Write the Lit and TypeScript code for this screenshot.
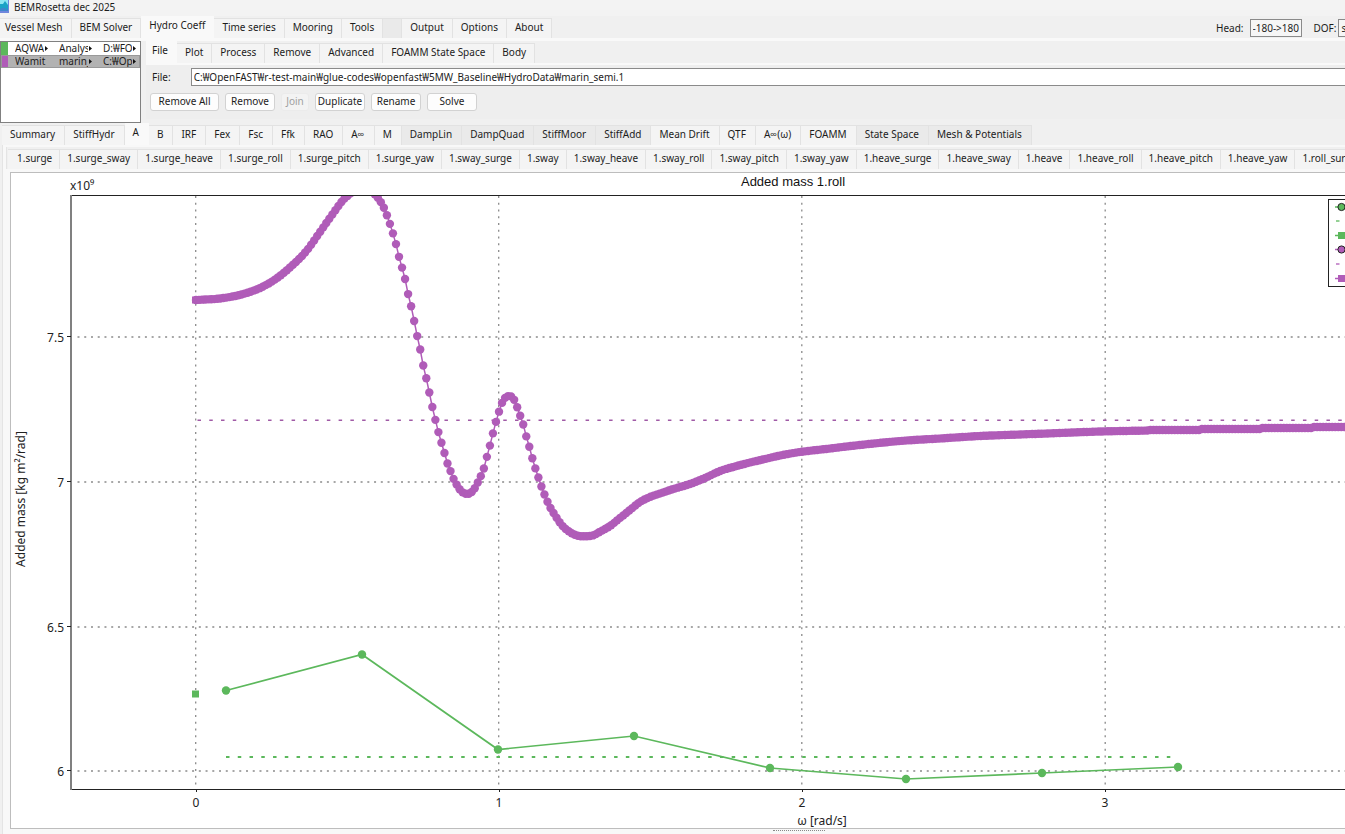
import { LitElement, html, css, svg, nothing } from "lit";
import { customElement, property } from "lit/decorators.js";
import { classMap } from "lit/directives/class-map.js";

interface Tab {
  label: string;
  active?: boolean;
  muted?: boolean;
}

const tabs = (names: string, active = "", muted: string[] = []): Tab[] =>
  names.split("|").map((label) => ({ label, active: label === active, muted: muted.includes(label) }));

const MENU = tabs(
  "Vessel Mesh|BEM Solver|Hydro Coeff|Time series|Mooring|Tools||Output|Options|About",
  "Hydro Coeff",
  [""],
);
const ACTIONS = tabs("File|Plot|Process|Remove|Advanced|FOAMM State Space|Body", "File");
const RESULTS = tabs(
  "Summary|StiffHydr|A|B|IRF|Fex|Fsc|Ffk|RAO|A∞|M|DampLin|DampQuad|StiffMoor|StiffAdd|Mean Drift|QTF|A∞(ω)|FOAMM|State Space|Mesh & Potentials",
  "A",
  ["DampLin", "DampQuad", "StiffMoor", "StiffAdd", "State Space", "Mesh & Potentials"],
);
const DOFS = tabs(
  "1.surge|1.surge_sway|1.surge_heave|1.surge_roll|1.surge_pitch|1.surge_yaw|1.sway_surge|1.sway|1.sway_heave|1.sway_roll|1.sway_pitch|1.sway_yaw|1.heave_surge|1.heave_sway|1.heave|1.heave_roll|1.heave_pitch|1.heave_yaw|1.roll_surge",
);

const GREEN = "#5cb85c";
const PURPLE = "#b05cb8";

/* Control points of the Wamit added mass curve, in plot units. */
const WAMIT: [number, number][] = [
  [196, 300], [205, 299.5], [215, 299], [230, 297], [245, 293.5], [260, 288], [275, 279.5], [290, 267.5],
  [306, 251.5], [320, 232], [333, 213.5], [343, 200], [348, 195.5], [355, 190], [362, 188],
  [370, 190], [378, 198], [383, 206], [386.3, 213.7], [389.3, 222], [392.3, 231.3], [395.3, 241.3],
  [398, 253], [401.3, 265], [404.7, 277.3], [407.3, 290.7], [410.7, 304.3], [413.7, 318.7], [416.5, 333],
  [419.8, 347.3], [422.3, 361.3], [425.7, 375.7], [428.8, 390], [431.5, 403.3], [434.7, 417],
  [437.5, 428.7], [440.7, 440.3], [444, 451.3], [446.7, 461.3], [450, 469.7], [452.7, 477], [455.7, 483],
  [458.7, 488], [461.7, 491.7], [466.7, 494], [470.7, 492.7], [473.7, 490], [477, 484], [480.3, 477.3],
  [483.7, 469], [486.3, 459], [489.3, 448], [492.2, 436.3], [495.3, 424.3], [498.5, 413.3], [501.2, 405],
  [504, 399], [508.3, 396], [511, 396.3], [513.7, 399], [516.7, 406], [519.7, 414.3], [523, 423.7],
  [525.8, 434.7], [529, 445.7], [531.8, 456.3], [534.7, 466.3], [538, 476.3], [540.8, 484.7], [544, 493.3],
  [546.8, 500.3], [550, 507], [553.3, 512.7], [561.7, 525], [568.3, 531], [576.7, 535.5], [585, 536.3],
  [593.3, 535.3], [600, 531.7], [610, 526], [620, 518], [630, 510], [640, 502], [650, 497], [660, 493.5],
  [675, 488.5], [690, 484], [705, 478], [720, 471], [735, 466.5], [750, 462.5], [765, 459], [780, 455.5],
  [800, 452], [830, 448.5], [860, 445], [900, 441], [940, 438.5], [980, 436], [1020, 434.5], [1060, 433],
  [1100, 431.5], [1150, 430.5], [1200, 429.5], [1260, 428.5], [1345, 427], [1520, 426],
];

const AQWA: [number, number][] = [
  [226, 690.5], [362, 654.5], [498, 749.5], [634, 736], [770, 768], [906, 779], [1042, 773], [1178, 767],
];

const STEP = 3.03;

function sample(points: [number, number][]): [number, number][] {
  const slope = (i: number) => {
    const a = points[Math.max(0, i - 1)];
    const b = points[Math.min(points.length - 1, i + 1)];
    return (b[1] - a[1]) / (b[0] - a[0]);
  };
  const out: [number, number][] = [];
  let i = 0;
  for (let x = points[0][0]; x < points[points.length - 1][0]; x += STEP) {
    while (x > points[i + 1][0]) i++;
    const [x0, y0] = points[i];
    const [x1, y1] = points[i + 1];
    const h = x1 - x0;
    const t = (x - x0) / h;
    const y =
      (2 * t ** 3 - 3 * t ** 2 + 1) * y0 +
      (t ** 3 - 2 * t ** 2 + t) * h * slope(i) +
      (3 * t ** 2 - 2 * t ** 3) * y1 +
      (t ** 3 - t ** 2) * h * slope(i + 1);
    out.push([x, x > 1150 ? Math.round(y) : y]);
  }
  return out;
}

const toPath = (pts: [number, number][]) => "M" + pts.map((p) => `${p[0].toFixed(1)} ${p[1].toFixed(1)}`).join("L");

@customElement("tab-strip")
export class TabStrip extends LitElement {
  @property({ attribute: false }) items: Tab[] = [];
  @property() label = "";

  static styles = css`
    :host {
      display: block;
      min-width: 0;
    }
    .strip {
      display: flex;
      align-items: flex-end;
      height: 22px;
      overflow: hidden;
    }
    .tab {
      flex: none;
      height: 20px;
      margin: 0;
      padding: 0 var(--tab-end, 8px) 2px var(--tab-start, 8px);
      border: 0 solid #e2e2e2;
      border-width: 1px 1px 0 0;
      background: #f4f4f4;
      color: #1c1c1c;
      font: 10px/17px "Noto Sans", "Open Sans", "Noto Sans CJK KR", sans-serif;
      white-space: pre;
    }
    .tab:first-child {
      padding-left: var(--first-start, 8px);
    }
    .tab.active {
      height: 22px;
      padding-bottom: 4px;
      border-color: #f9f9f9;
      background: #f9f9f9;
    }
    .tab.muted {
      background: #eaeaea;
    }
    .tab.blank {
      width: 19px;
    }
  `;

  render() {
    return html`<div class="strip" role="tablist" aria-label=${this.label}>
      ${this.items.map(
        (t) => html`<button
          class=${classMap({ tab: true, active: !!t.active, muted: !!t.muted, blank: !t.label })}
          role="tab"
          aria-selected=${t.active ? "true" : "false"}
        >${t.label}</button>`,
      )}
    </div>`;
  }
}

@customElement("mass-chart")
export class MassChart extends LitElement {
  static styles = css`
    :host {
      display: block;
      overflow: hidden;
    }
    .chart {
      display: block;
      width: 100%;
      height: 655px;
    }
    .text {
      font: 12px "Noto Sans", sans-serif;
      fill: #222;
    }
    .title {
      font: 13px "Liberation Sans", Arial, sans-serif;
      fill: #111;
    }
    .grid {
      stroke: #8a8a8a;
      stroke-width: 1.3;
      stroke-dasharray: 2 4.74;
    }
    .axis {
      stroke: #222;
      stroke-width: 1;
      fill: none;
    }
  `;

  private legendItem(y: number, color: string, kind: string) {
    if (kind === "dash") return svg`<path d="M1336 ${y}h3.5" stroke=${color} stroke-width="1.3" />`;
    return svg`<path d="M1335 ${y}h12" stroke=${color} stroke-width="1.5" />
      ${kind === "dot"
        ? svg`<circle cx="1341.500" cy=${y} r="3.600" fill=${color} stroke="#222" stroke-width="1" />`
        : svg`<rect x="1338" y=${y - 3.5} width="7" height="7" fill=${color} />`}`;
  }

  render() {
    const wamit = sample(WAMIT);
    return html`<svg class="chart" role="img" aria-label="Added mass 1.roll">
      <defs>
        <clipPath id="plot"><rect x="71" y="196" width="1445" height="593" /></clipPath>
      </defs>
      <g transform="translate(-11 -173)">
        ${[337, 482, 627, 771].map((y) => svg`<path class="grid" d="M77.500 ${y}H1516" />`)}
        ${[195.7, 498.7, 801.8, 1105.2].map((x) => svg`<path class="grid" d="M${x} 196V789" />`)}
        <path class="axis" d="M71 195.500H1516M71 789.500H1516" />
        <path d="M71 195V790" stroke="#808080" stroke-width="2" />
        ${[337, 482, 627, 771].map((y) => svg`<path class="axis" d="M67 ${y - 0.5}h4" />`)}
        ${[196, 499, 802, 1105].map((x) => svg`<path class="axis" d="M${x + 0.5} 789v3" />`)}

        <path d="M226 757H1172" stroke=${GREEN} stroke-width="1.800" stroke-dasharray="3.500 8.260" />
        <path d=${toPath(AQWA)} stroke=${GREEN} stroke-width="1.700" fill="none" />
        ${AQWA.map(([x, y]) => svg`<circle cx=${x} cy=${y} r="4.200" fill=${GREEN} />`)}
        <rect x="192" y="690.500" width="7" height="7" fill=${GREEN} />

        <path d="M197 420.300H1516" stroke="#a05aa6" stroke-width="1.500" stroke-dasharray="3.500 8.260" stroke-dashoffset="-0.500" />
        <g clip-path="url(#plot)">
          <path d=${toPath(wamit)} stroke=${PURPLE} stroke-width="1.500" fill="none" />
          ${wamit.map(([x, y]) => svg`<circle cx=${x} cy=${y} r="4.200" fill=${PURPLE} />`)}
          <rect x="192" y="296.500" width="7" height="7" fill=${PURPLE} />
        </g>

        <rect x="1328.500" y="199.500" width="180" height="87" fill="#fff" stroke="#222" />
        ${this.legendItem(207, GREEN, "dot")} ${this.legendItem(221, GREEN, "dash")}
        ${this.legendItem(235.5, GREEN, "box")} ${this.legendItem(249.5, PURPLE, "dot")}
        ${this.legendItem(264, PURPLE, "dash")} ${this.legendItem(278.5, PURPLE, "box")}

        <text class="title" x="793" y="186" text-anchor="middle">Added mass 1.roll</text>
        <text class="text" x="70" y="190">x10⁹</text>
        ${[["7.5", 337], ["7", 482], ["6.5", 627], ["6", 771]].map(
          ([t, y]) => svg`<text class="text" x="64" y=${Number(y) + 5} text-anchor="end">${t}</text>`,
        )}
        ${[["0", 196], ["1", 499], ["2", 802], ["3", 1105]].map(
          ([t, x]) => svg`<text class="text" x=${x} y="807" text-anchor="middle">${t}</text>`,
        )}
        <text class="text" x="822" y="825" text-anchor="middle">ω [rad/s]</text>
        <text class="text" transform="translate(25 499) rotate(-90)" text-anchor="middle">Added mass [kg m²/rad]</text>
      </g>
    </svg>`;
  }
}

@customElement("app-root")
export class AppRoot extends LitElement {
  static styles = css`
    :host {
      display: flex;
      flex-direction: column;
      min-height: 100vh;
      overflow: hidden;
      background: #f0f0f0;
      color: #1c1c1c;
      font: 10px/14px "Noto Sans", "Open Sans", "Noto Sans CJK KR", sans-serif;
    }
    .titlebar {
      display: flex;
      align-items: center;
      gap: 5px;
      height: 16px;
      background: #f3f3f3;
    }
    .logo {
      display: block;
      width: 9px;
      height: 13px;
      margin-bottom: 3px;
    }
    .name {
      padding-bottom: 2px;
    }
    .menubar {
      display: flex;
      justify-content: space-between;
      border-bottom: 3px solid #f9f9f9;
    }
    .menu {
      --first-start: 5px;
    }
    .filters {
      display: flex;
      flex: none;
      align-items: center;
      gap: 8px;
      width: 129px;
      padding-top: 1px;
      overflow: hidden;
    }
    .pair {
      display: flex;
      flex: none;
      align-items: center;
      gap: 6px;
    }
    .pair.close {
      gap: 2px;
      padding-left: 4px;
    }
    .field {
      box-sizing: border-box;
      height: 18px;
      margin: 0;
      padding: 0 2px;
      border: 1px solid #8a8a8a;
      border-radius: 0;
      background: #fff;
      color: #1c1c1c;
      font: inherit;
    }
    .pair .field {
      width: 52px;
      background: #f6f6f6;
    }
    .workspace {
      display: flex;
      gap: 5px;
    }
    .models {
      box-sizing: border-box;
      flex: none;
      width: 141px;
      height: 82px;
      border: 1px solid #808080;
      background: #fff;
    }
    .grid {
      width: 100%;
      border-collapse: collapse;
      table-layout: fixed;
    }
    .row {
      height: 13px;
    }
    .row.selected {
      background: #b2b2b2;
      outline: 1px solid #999;
      outline-offset: -1px;
    }
    .cell {
      padding: 0 0 0 7px;
      line-height: 13px;
    }
    .swatch {
      width: 7px;
      padding: 0;
    }
    .green {
      background: #5cb85c;
    }
    .purple {
      background: #b05cb8;
    }
    .clip {
      display: flex;
      align-items: center;
      gap: 1px;
    }
    .value {
      width: 29px;
      overflow: hidden;
      white-space: nowrap;
    }
    .value.whole {
      width: 35px;
    }
    .more {
      display: block;
      width: 3px;
      height: 5px;
    }
    .panel {
      --first-start: 6px;
      flex: 1;
      min-width: 0;
    }
    .form {
      padding: 3px 0 8px 5px;
      border-top: 2px solid #f9f9f9;
      background: #eeeeee;
    }
    .path {
      display: flex;
      align-items: center;
      gap: 20px;
    }
    .path .field {
      flex: 1;
      min-width: 0;
      border-right: 0;
    }
    .path label {
      padding-left: 1px;
    }
    .buttons {
      display: flex;
      gap: 6px;
      padding-top: 7px;
      margin-left: -1px;
    }
    .button {
      box-sizing: border-box;
      width: 50px;
      height: 18px;
      margin: 0;
      padding: 0 0 1px;
      border: 1px solid #d2d2d2;
      border-radius: 3px;
      background: #fdfdfd;
      color: #1c1c1c;
      font: inherit;
      line-height: 15px;
    }
    .button.wide {
      width: 69px;
    }
    .button.narrow {
      width: 28px;
    }
    .button:disabled {
      border-color: #ebebeb;
      background: #f3f3f3;
      color: #a0a0a0;
    }
    .results {
      --tab-end: 9px;
      padding-left: 2px;
    }
    .body {
      flex: 1;
      margin-left: 2px;
      padding: 2px 0 5px 3px;
      border-left: 1px solid #e4e4e4;
      background: #f8f8f8;
    }
    .dofs {
      --tab-start: 7px;
      --tab-end: 7px;
      --first-start: 9px;
      padding-left: 1px;
      border-left: 1px solid #e4e4e4;
      background: #f0f0f0;
    }
    .sheet {
      margin: 3px 0 0 4px;
      border: 1px solid #bdbdbd;
      border-right: 0;
      background: #fff;
    }
    .handle {
      width: 52px;
      margin: 1px auto 0;
      border-top: 1px dotted #888;
      transform: translateX(123px);
    }
  `;

  private clip(text: string, cut = true) {
    return html`<td class="cell"><div class="clip"><span class=${classMap({ value: true, whole: !cut })}>${text}</span>${cut
      ? html`<svg class="more" viewBox="0 0 3 5"><path d="M0 0L3 2.500L0 5Z" fill="#111" /></svg>`
      : nothing}</div></td>`;
  }

  render() {
    return html`
      <header class="titlebar">
        <svg class="logo" viewBox="0 0 9 13" aria-hidden="true">
          <rect width="9" height="13" fill="#6f86dc" />
          <rect width="8" height="11" fill="#8fe6f2" />
          <path d="M0 4L3 4L5 1L8 5V11H0Z" fill="#1ba3c6" />
          <path d="M0 9Q4 6 8 10V11H0Z" fill="#3f86cc" />
        </svg>
        <span class="name">BEMRosetta dec 2025</span>
      </header>
      <div class="menubar">
        <tab-strip class="menu" .items=${MENU} label="Main"></tab-strip>
        <div class="filters">
          <div class="pair"><label for="head">Head:</label><input id="head" class="field" .value=${"-180->180"} /></div>
          <div class="pair close"><label for="dof">DOF:</label><input id="dof" class="field" .value=${"surge"} /></div>
        </div>
      </div>
      <div class="workspace">
        <div class="models">
          <table class="grid">
            <colgroup><col style="width:7px" /><col /><col /><col /></colgroup>
            <tr class="row"><td class="swatch green"></td>${this.clip("AQWA")}${this.clip("Analysis")}${this.clip("D:₩FOWT")}</tr>
            <tr class="row selected"><td class="swatch purple"></td>${this.clip("Wamit", false)}${this.clip("marin_semi")}${this.clip("C:₩OpenFAST")}</tr>
          </table>
        </div>
        <div class="panel">
          <tab-strip .items=${ACTIONS} label="Actions"></tab-strip>
          <div class="form">
            <div class="path">
              <label for="file">File:</label>
              <input id="file" class="field" .value=${"C:₩OpenFAST₩r-test-main₩glue-codes₩openfast₩5MW_Baseline₩HydroData₩marin_semi.1"} />
            </div>
            <div class="buttons">
              <button class="button wide">Remove All</button>
              <button class="button">Remove</button>
              <button class="button narrow" disabled>Join</button>
              <button class="button">Duplicate</button>
              <button class="button">Rename</button>
              <button class="button">Solve</button>
            </div>
          </div>
        </div>
      </div>
      <tab-strip class="results" .items=${RESULTS} label="Results"></tab-strip>
      <div class="body">
        <tab-strip class="dofs" .items=${DOFS} label="Degrees of freedom"></tab-strip>
        <div class="sheet"><mass-chart></mass-chart></div>
        <div class="handle"></div>
      </div>
    `;
  }
}
